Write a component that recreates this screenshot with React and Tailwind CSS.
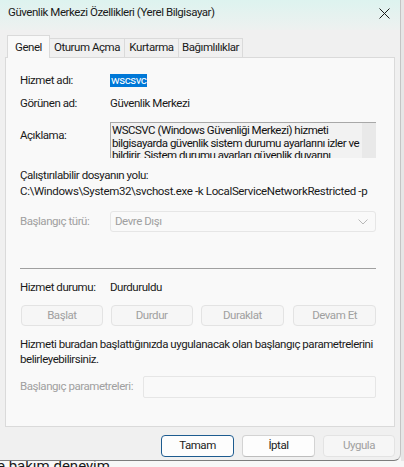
import React from "react";

const font = { fontFamily: 'Roboto, "Liberation Sans", Arial, sans-serif' };

function Btn({ children, disabled, focused, className = "" }) {
  return (
    <div
      className={
        "flex items-center justify-center rounded-[4px] text-[11.5px] tracking-[-0.45px] whitespace-nowrap " +
        (focused
          ? "border-[1.5px] border-[#1d5b8f] bg-[#fdfdfd] text-[#1b1b1b] "
          : disabled
          ? "border border-[#e3e3e3] bg-[#f6f6f6] text-[#a0a0a0] "
          : "border border-[#d3d3d3] border-b-[#bdbdbd] bg-[#fdfdfd] text-[#1b1b1b] ") +
        className
      }
    >
      {children}
    </div>
  );
}

function Tab({ children, className = "" }) {
  return (
    <div
      className={
        "h-[19px] flex items-center justify-center border-t border-r border-[#dadada] bg-[#f0f0f0] text-[11.5px] text-[#1a1a1a] whitespace-nowrap tracking-[-0.45px] " +
        className
      }
    >
      {children}
    </div>
  );
}

export default function App() {
  return (
    <div className="w-[404px] h-[467px] overflow-hidden bg-[#f7f7f7] flex flex-col" style={font}>
      <div className="flex h-[461px] shrink-0">
        {/* dialog window */}
        <div className="w-[401px] h-full bg-[#f0f0f0] rounded-br-[7px] border-r border-b border-r-[#c4c4c4] border-b-[#7c7c7c] flex flex-col overflow-hidden">
          {/* title bar */}
          <div className="h-[30px] shrink-0 flex items-center justify-between pl-[8px] pr-[10px] pb-[4px] bg-gradient-to-b from-[#ddf3ef] to-[#eef1f0]">
            <span className="text-[11.5px] tracking-[-0.45px] text-[#1a1a1a] whitespace-nowrap">Güvenlik Merkezi Özellikleri (Yerel Bilgisayar)</span>
            <svg width="11" height="11" viewBox="0 0 11 11">
              <path d="M0.5 0.5 L10.5 10.5 M10.5 0.5 L0.5 10.5" stroke="#1a1a1a" strokeWidth="1" />
            </svg>
          </div>

          {/* tabs */}
          <div className="flex items-end pl-[7px] h-[27px] shrink-0">
            <div className="relative z-10 h-[23px] w-[43px] flex items-start justify-center pt-[3px] bg-[#f9f9f9] border border-b-0 border-[#dadada] text-[11.5px] tracking-[-0.45px] text-[#1a1a1a] mb-[-1px]">
              Genel
            </div>
            <Tab className="w-[75px]">Oturum Açma</Tab>
            <Tab className="w-[54px]">Kurtarma</Tab>
            <Tab className="w-[64px]">Bağımlılıklar</Tab>
          </div>

          {/* tab page */}
          <div className="ml-[5px] w-[390px] h-[370px] shrink-0 bg-[#f9f9f9] border border-[#dadada] pl-[14px] text-[11.5px] tracking-[-0.45px] text-[#1a1a1a] flex flex-col whitespace-nowrap">
            <div className="flex items-center h-[15px] mt-[15px]">
              <span className="w-[90px]">Hizmet adı:</span>
              <span className="bg-[#0078d7] text-white leading-[13px] px-[1px]">wscsvc</span>
            </div>
            <div className="flex items-center h-[15px] mt-[8px]">
              <span className="w-[90px]">Görünen ad:</span>
              <span>Güvenlik Merkezi</span>
            </div>
            <div className="flex mt-[11px]">
              <span className="w-[90px] pt-[5px]">Açıklama:</span>
              <div className="w-[266px] h-[36px] border-t border-l border-[#a8a8a8] bg-[#f2f2f2] flex overflow-hidden">
                <div className="w-[251px] pl-[1px] pt-[1px] text-[11.5px] leading-[12.5px] text-[#111] tracking-[-0.5px] overflow-hidden">
                  WSCSVC (Windows Güvenliği Merkezi) hizmeti
                  <br />
                  bilgisayarda güvenlik sistem durumu ayarlarını izler ve
                  <br />
                  bildirir. Sistem durumu ayarları güvenlik duvarını
                </div>
                <div className="flex-1 bg-[#e9e9e9]"></div>
              </div>
            </div>
            <div className="mt-[10px] leading-[15px]">Çalıştırılabilir dosyanın yolu:</div>
            <div className="mt-[1px] leading-[15px] tracking-[-0.35px]">C:\Windows\System32\svchost.exe -k LocalServiceNetworkRestricted -p</div>
            <div className="flex items-center mt-[12px]">
              <span className="w-[90px] text-[#a0a0a0]">Başlangıç türü:</span>
              <div className="w-[266px] h-[21px] border border-[#e6e6e6] rounded-[3px] bg-[#f9f9f9] flex items-center justify-between pl-[4px] pr-[7px] text-[#a0a0a0]">
                <span>Devre Dışı</span>
                <svg width="10" height="6" viewBox="0 0 10 6">
                  <path d="M0.5 0.5 L5 5 L9.5 0.5" fill="none" stroke="#b8b8b8" strokeWidth="1" />
                </svg>
              </div>
            </div>
            <div className="mt-[36px] h-px w-[356px] bg-[#a0a0a0]"></div>
            <div className="flex items-center mt-[11px] h-[15px]">
              <span className="w-[90px]">Hizmet durumu:</span>
              <span>Durduruldu</span>
            </div>
            <div className="flex mt-[10px] w-[356px]">
              <Btn disabled className="ml-[1px] w-[82px] h-[21px]">Başlat</Btn>
              <Btn disabled className="ml-[8px] w-[82px] h-[21px]">Durdur</Btn>
              <Btn disabled className="ml-[8px] w-[84px] h-[21px]">Duraklat</Btn>
              <Btn disabled className="ml-[9px] w-[83px] h-[21px]">Devam Et</Btn>
            </div>
            <div className="mt-[11px] leading-[15px]">
              Hizmeti buradan başlattığınızda uygulanacak olan başlangıç parametrelerini
              <br />
              belirleyebilirsiniz.
            </div>
            <div className="flex items-center mt-[9px]">
              <span className="w-[123px] text-[#a0a0a0]">Başlangıç parametreleri:</span>
              <div className="w-[233px] h-[22px] border border-[#e6e6e6] rounded-[2px] bg-[#f9f9f9]"></div>
            </div>
          </div>

          {/* dialog buttons */}
          <div className="flex justify-end pr-[5px] mt-[8px]">
            <Btn focused className="w-[73px] h-[22px]">Tamam</Btn>
            <Btn className="ml-[8px] w-[73px] h-[22px]">İptal</Btn>
            <Btn disabled className="ml-[8px] w-[72px] h-[22px]">Uygula</Btn>
          </div>
        </div>
        <div className="flex-1 bg-[#e6e6e6]"></div>
      </div>
      <div className="flex-1 overflow-hidden relative">
        <span className="absolute left-[-3px] top-[-6px] text-[15px] text-[#1a1a1a] whitespace-nowrap">e bakım deneyim</span>
      </div>
    </div>
  );
}
